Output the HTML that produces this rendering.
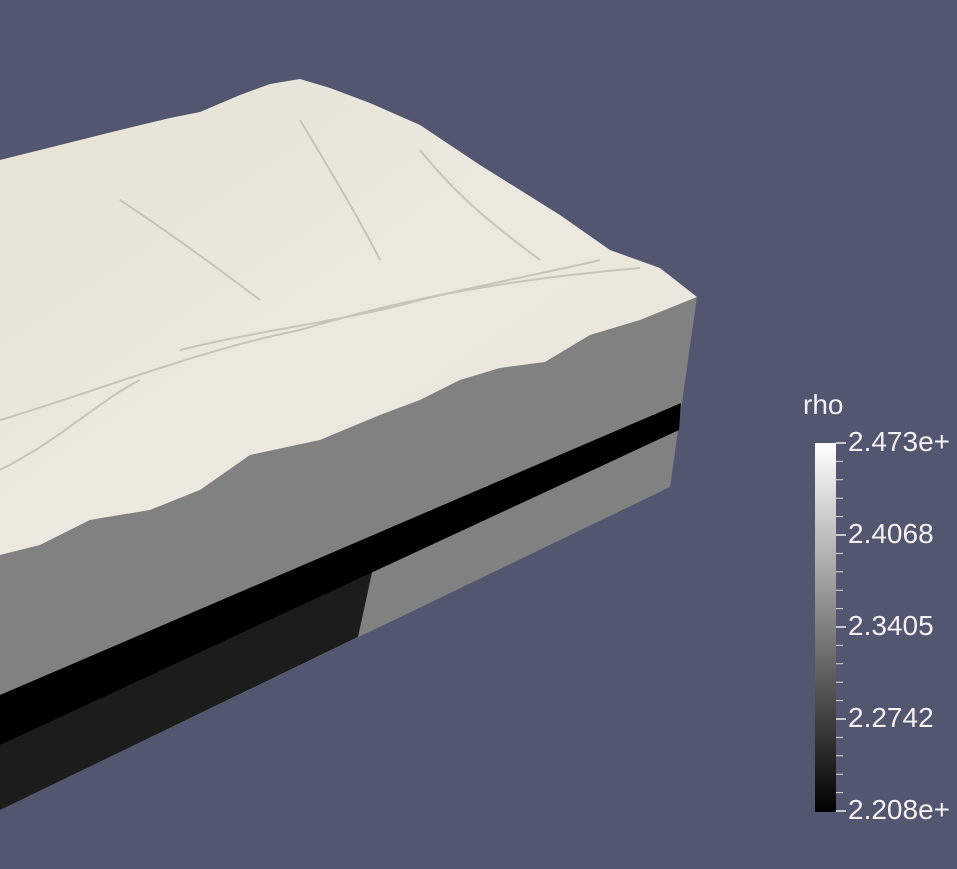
<!DOCTYPE html>
<html><head><style>
html,body{margin:0;padding:0;background:#52566e;overflow:hidden}
body{width:957px;height:869px;position:relative;font-family:"Liberation Sans","DejaVu Sans",sans-serif}
svg{position:absolute;left:0;top:0}
.t{position:absolute;color:#f2f2f2;font-size:28px;line-height:1;white-space:nowrap}
</style></head><body>
<svg width="957" height="869" viewBox="0 0 957 869">
<defs>
<linearGradient id="cb" x1="0" y1="0" x2="0" y2="1">
<stop offset="0" stop-color="#fff"/><stop offset="1" stop-color="#000"/>
</linearGradient>
<linearGradient id="ter" x1="0" y1="0" x2="1" y2="1">
<stop offset="0" stop-color="#e6e2d6"/><stop offset="0.5" stop-color="#ece8de"/><stop offset="1" stop-color="#e9e5da"/>
</linearGradient>
</defs>
<polygon points="0,555 40,545 90,520 150,510 200,490 250,455 320,440 380,415 420,400 460,380 500,368 545,362 590,335 640,320 697,297 670,487 0,810" fill="#818181"/>
<polygon points="0,745 373,568 358,637 0,810" fill="#1c1c1c"/>
<polygon points="0,695 681,403 679,430 0,745" fill="#000"/>
<polygon points="0,160 60,145 120,130 170,118 200,112 240,95 270,84 300,79 330,88 370,103 420,125 450,145 480,165 520,190 560,215 610,250 660,268 697,297 640,320 590,335 545,362 500,368 460,380 420,400 380,415 320,440 250,455 200,490 150,510 90,520 40,545 0,555" fill="url(#ter)"/>
<g fill="none" stroke="#b9b5aa" stroke-width="2" opacity="0.7">
<path d="M0,420 C100,390 200,350 300,330 C400,300 500,280 640,268"/>
<path d="M180,350 C260,330 350,320 420,300 C480,285 560,270 600,260"/>
<path d="M120,200 C180,240 220,270 260,300"/>
<path d="M300,120 C330,170 360,220 380,260"/>
<path d="M0,470 C60,440 100,400 140,380"/>
<path d="M420,150 C460,200 500,230 540,260"/>
</g>
<rect x="815" y="443" width="21" height="369" fill="url(#cb)"/>
<g stroke="#eee" stroke-width="1.5">
<path d="M836,443h10 M836,535h10 M836,627h10 M836,719h10 M836,811h10"/>
</g>
<g stroke="#ddd" stroke-width="1">
<path d="M836,461.4h7 M836,479.8h7 M836,498.2h7 M836,516.6h7 M836,553.4h7 M836,571.8h7 M836,590.2h7 M836,608.6h7 M836,645.4h7 M836,663.8h7 M836,682.2h7 M836,700.6h7 M836,737.4h7 M836,755.8h7 M836,774.2h7 M836,792.6h7"/>
</g>
</svg>
<div class="t" style="left:803px;top:391px">rho</div>
<div class="t" style="left:848px;top:428px">2.473e+</div>
<div class="t" style="left:848px;top:520px">2.4068</div>
<div class="t" style="left:848px;top:612px">2.3405</div>
<div class="t" style="left:848px;top:704px">2.2742</div>
<div class="t" style="left:848px;top:796px">2.208e+</div>
</body></html>
